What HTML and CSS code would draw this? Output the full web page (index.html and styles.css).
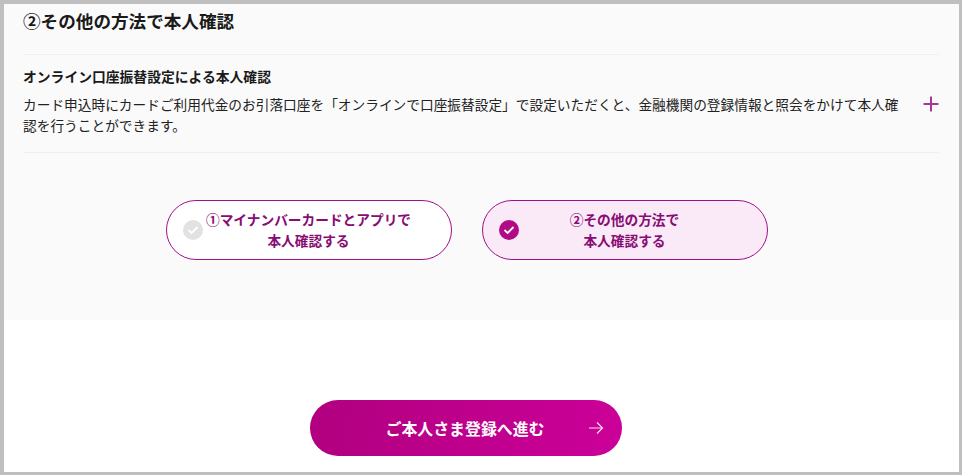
FILE: index.html
```html
<!DOCTYPE html>
<html lang="ja">
<head>
<meta charset="utf-8">
<title>本人確認</title>
<link rel="stylesheet" href="styles.css">
</head>
<body>
<div class="frame">
  <section class="panel">
    <h2 class="title">②その他の方法で本人確認</h2>
    <div class="item">
      <div class="item-body">
        <h3 class="item-title">オンライン口座振替設定による本人確認</h3>
        <p class="item-text">カード申込時にカードご利用代金のお引落口座を「オンラインで口座振替設定」で設定いただくと、金融機関の登録情報と照会をかけて本人確認を行うことができます。</p>
      </div>
      <svg class="plus" width="16" height="16" viewBox="0 0 16 16" aria-hidden="true"><path d="M8 0.5V15.5M0.5 8H15.5" stroke="#a8388f" stroke-width="2" fill="none"/></svg>
    </div>
    <div class="choices">
      <button class="choice" type="button">
        <span class="check check-off"><svg width="12" height="10" viewBox="0 0 12 10"><path d="M1.5 5L4.6 8L10.5 2" stroke="#fff" stroke-width="1.8" fill="none"/></svg></span>
        <span class="choice-label">①マイナンバーカードとアプリで<br>本人確認する</span>
      </button>
      <button class="choice choice-on" type="button">
        <span class="check check-on"><svg width="12" height="10" viewBox="0 0 12 10"><path d="M1.5 5L4.6 8L10.5 2" stroke="#fff" stroke-width="1.8" fill="none"/></svg></span>
        <span class="choice-label">②その他の方法で<br>本人確認する</span>
      </button>
    </div>
  </section>
  <div class="actions">
    <button class="next" type="button">
      <span>ご本人さま登録へ進む</span>
      <svg class="arrow" width="16" height="14" viewBox="0 0 16 14" aria-hidden="true"><path d="M1 7H14.5M9 1.5L14.5 7L9 12.5" stroke="#f6dff0" stroke-width="1.2" fill="none"/></svg>
    </button>
  </div>
</div>
</body>
</html>
```
FILE: styles.css
```css
* { box-sizing: border-box; }
html, body { margin: 0; padding: 0; }
body {
  width: 962px;
  height: 475px;
  overflow: hidden;
  background: #fff;
  font-family: "Noto Sans CJK JP", "Noto Sans", sans-serif;
  color: #1a1a1a;
}
.frame {
  width: 962px;
  height: 475px;
  border-style: solid;
  border-color: #bfbfbf;
  border-width: 4px 3px 3px 4px;
  background: #fff;
  overflow: hidden;
}
.panel {
  height: 316px;
  background: #fafafa;
  padding: 0 20px 0 19px;
}
.title {
  margin: 0;
  height: 50px;
  padding-top: 4px;
  font-size: 17.6px;
  line-height: 26px;
  font-weight: 700;
  color: #1a1a1a;
}
.item {
  display: flex;
  align-items: center;
  height: 99px;
  border-top: 1px solid #efefef;
  border-bottom: 1px solid #efefef;
}
.item-body { width: 880px; padding-bottom: 6px; }
.item-title {
  margin: 0 0 8px;
  font-size: 13.8px;
  line-height: 20px;
  font-weight: 700;
}
.item-text {
  margin: 0;
  font-size: 13.7px;
  line-height: 21px;
  color: #222;
}
.plus { margin-left: 20px; flex: none; }
.choices {
  display: flex;
  justify-content: center;
  gap: 30px;
  margin-top: 47px;
  padding-right: 29px;
}
.choice {
  position: relative;
  width: 286px;
  height: 60px;
  border: 1px solid #a0108c;
  border-radius: 30px;
  background: #fff;
  color: #870c74;
  font: inherit;
  font-size: 13.7px;
  font-weight: 700;
  line-height: 21px;
  padding: 0 30px;
  display: flex;
  align-items: center;
  justify-content: center;
}
.choice-on { background: #fae9f6; }
.check {
  position: absolute;
  left: 16px;
  top: 19px;
  width: 20px;
  height: 20px;
  border-radius: 50%;
  display: flex;
  align-items: center;
  justify-content: center;
}
.check-off { background: #e2e2e2; }
.check-on { background: #b00a86; }
.choice-label { display: block; text-align: center; }
.actions {
  display: flex;
  justify-content: center;
  padding-top: 80px;
  padding-right: 31px;
}
.next {
  position: relative;
  width: 312px;
  height: 56px;
  border: 0;
  border-radius: 28px;
  background: linear-gradient(100deg, #b0007f, #cc0099);
  color: #fff;
  font: inherit;
  font-size: 15.9px;
  font-weight: 700;
  display: flex;
  align-items: center;
  justify-content: center;
  padding: 0 2px 0 0;
}
.arrow { position: absolute; right: 18px; top: 21px; }
```
